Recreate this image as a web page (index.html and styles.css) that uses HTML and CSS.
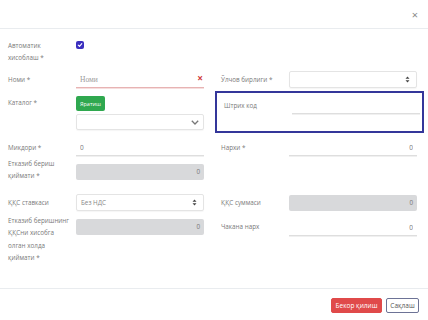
FILE: index.html
```html
<!DOCTYPE html>
<html lang="uz">
<head>
  <meta charset="UTF-8" />
  <meta name="viewport" content="width=device-width, initial-scale=1.0" />
  <title>Маҳсулот</title>
  <link rel="stylesheet" href="styles.css">
</head>
<body>
  <div class="modal">
    <div class="modal-header">
      <button type="button" class="close">&times;</button>
    </div>

    <div class="modal-body">
      <div class="row row-auto">
        <div class="group left top">
          <label class="lbl">Автоматик<br>хисоблаш *</label>
          <div class="ctl">
            <span class="check">
              <svg width="6" height="6" viewBox="0 0 10 10"><path d="M2 5.2 4.2 7.3 8 2.8" fill="none" stroke="#fff" stroke-width="1.8" stroke-linecap="round" stroke-linejoin="round"/></svg>
            </span>
          </div>
        </div>
      </div>

      <div class="row row-name">
        <div class="group left">
          <label class="lbl">Номи *</label>
          <div class="ctl line invalid">
            <input type="text" placeholder="Номи" spellcheck="false">
            <span class="clear">&times;</span>
          </div>
        </div>
        <div class="group right">
          <label class="lbl">Ўлчов бирлиги *</label>
          <div class="ctl select">
            <span></span>
            <svg class="updown" width="5" height="7" viewBox="0 0 5 7"><path d="M2.5 0.5 4.5 2.7H0.5Z M2.5 6.5 4.5 4.3H0.5Z" fill="#444"/></svg>
          </div>
        </div>
      </div>

      <div class="row row-catalog">
        <div class="group left top">
          <label class="lbl lbl-btn">Каталог *</label>
          <div class="ctl stack">
            <button type="button" class="btn-green">Яратиш</button>
            <div class="select">
              <span></span>
              <svg width="8" height="5" viewBox="0 0 8 5"><path d="M0.8 0.8 4 4 7.2 0.8" fill="none" stroke="#777" stroke-width="1.3"/></svg>
            </div>
          </div>
        </div>
        <div class="group right focus">
          <label class="lbl">Штрих код</label>
          <div class="ctl line"><input type="text" spellcheck="false"></div>
        </div>
      </div>

      <div class="row row-qty">
        <div class="group left">
          <label class="lbl">Микдори *</label>
          <div class="ctl line"><input type="text" value="0" spellcheck="false"></div>
        </div>
        <div class="group right">
          <label class="lbl">Нархи *</label>
          <div class="ctl line"><input type="text" class="num" value="0" spellcheck="false"></div>
        </div>
      </div>

      <div class="row row-cost">
        <div class="group left">
          <label class="lbl">Етказиб бериш<br>қиймати *</label>
          <div class="ctl readonly">0</div>
        </div>
      </div>

      <div class="row row-vat">
        <div class="group left">
          <label class="lbl">ҚҚС ставкаси</label>
          <div class="ctl select">
            <span>Без НДС</span>
            <svg class="updown" width="5" height="7" viewBox="0 0 5 7"><path d="M2.5 0.5 4.5 2.7H0.5Z M2.5 6.5 4.5 4.3H0.5Z" fill="#444"/></svg>
          </div>
        </div>
        <div class="group right">
          <label class="lbl">ҚҚС суммаси</label>
          <div class="ctl readonly">0</div>
        </div>
      </div>

      <div class="row row-total">
        <div class="group left top">
          <label class="lbl lbl-long">Етказиб беришнинг<br>ҚҚСни хисобга<br>олган холда<br>қиймати *</label>
          <div class="ctl readonly">0</div>
        </div>
        <div class="group right top">
          <label class="lbl lbl-mid">Чакана нарх</label>
          <div class="ctl line"><input type="text" class="num" value="0" spellcheck="false"></div>
        </div>
      </div>
    </div>

    <div class="modal-footer">
      <button type="button" class="btn btn-danger">Бекор қилиш</button>
      <button type="button" class="btn btn-outline">Сақлаш</button>
    </div>
  </div>
</body>
</html>
```

FILE: styles.css
```css
* {
  box-sizing: border-box;
}
body {
  margin: 0;
  background: #fff;
  font-family: 'Open Sans', sans-serif;
  font-size: 6.3px;
  color: #777;
}
.modal {
  width: 428px;
  height: 320px;
  display: flex;
  flex-direction: column;
}
.modal-header {
  height: 29px;
  border-bottom: 1px solid #e9ecef;
  display: flex;
  justify-content: flex-end;
  align-items: center;
  padding-right: 10px;
}
.close {
  border: none;
  background: none;
  padding: 0;
  font-family: 'Open Sans', sans-serif;
  font-size: 11px;
  line-height: 11px;
  color: #888;
  margin-top: 1px;
}
.modal-body {
  flex: 1;
  padding-top: 11px;
}
.row {
  display: flex;
}
.group {
  width: 214px;
  display: grid;
  grid-template-columns: 68px 128px;
  align-items: center;
}
.group.top {
  align-items: start;
}
.group.left {
  padding-left: 8px;
}
.group.right {
  padding-left: 7px;
}
.lbl {
  line-height: 12px;
  color: #7a7a7a;
  white-space: nowrap;
}

/* row spacing */
.row-name { margin-top: 7px; }
.row-catalog { margin-top: 3px; }
.row-qty { margin-top: 6px; }
.row-cost { margin-top: 5px; }
.row-vat { margin-top: 12px; }
.row-total { margin-top: 8px; }

.ctl {
  height: 17px;
  position: relative;
}
.check {
  display: flex;
  align-items: center;
  justify-content: center;
  width: 8px;
  height: 8px;
  margin-top: 1px;
  border-radius: 2px;
  background: #3b2fbf;
}
.row-auto .ctl {
  height: 24px;
}
.line {
  border-bottom: 1px solid #dedede;
  box-shadow: 0 1px 0 #f0f0f0;
}
.line.invalid {
  border-bottom-color: #e7b3b3;
  box-shadow: 0 1px 0 #f6dede;
}
.line input {
  width: 100%;
  height: 16px;
  border: none;
  outline: none;
  padding: 0 4px;
  background: transparent;
  font-family: 'Open Sans', sans-serif;
  font-size: 6.5px;
  color: #777;
  -webkit-text-fill-color: #777;
}
.line input::placeholder {
  font-family: 'Liberation Serif', serif;
  color: #9a9a9a;
  -webkit-text-fill-color: #9a9a9a;
  font-size: 7.5px;
}
.line input.num {
  text-align: right;
}
.clear {
  position: absolute;
  right: 1px;
  top: 2px;
  font-size: 10px;
  line-height: 11px;
  font-weight: bold;
  color: #d03a3a;
}
.select {
  height: 17px;
  border: 1px solid #e4e4e4;
  border-radius: 2px;
  box-shadow: 0 1px 1px rgba(0, 0, 0, 0.04);
  display: flex;
  align-items: center;
  justify-content: space-between;
  padding: 0 6px 0 4px;
  color: #888;
}
.readonly {
  height: 16px;
  background: #d8d9db;
  border-radius: 2px;
  text-align: right;
  padding-right: 4px;
  line-height: 16px;
  color: #777;
}
.stack {
  height: auto;
  padding-top: 5px;
}
.btn-green {
  display: block;
  height: 15px;
  padding: 0 4px;
  border: none;
  border-radius: 2px;
  background: #2fa84f;
  color: #fff;
  font-family: 'Open Sans', sans-serif;
  font-size: 5.5px;
  margin-bottom: 3px;
}
.stack .select {
  height: 16px;
  padding-right: 4px;
}
.lbl-btn {
  padding-top: 6px;
}
.focus {
  margin-left: 1px;
  margin-right: 4px;
  width: 209px;
  height: 42px;
  border: 2px solid #34369a;
  padding-left: 4px;
  align-items: start;
  padding-top: 4px;
}
.focus .lbl {
  padding-top: 3px;
}
.focus .ctl {
  height: 17px;
}
.row-cost .lbl {
  margin-top: -3px;
}
.lbl-long {
  margin-top: -4px;
  line-height: 12.3px;
}
.lbl-mid {
  padding-top: 2px;
}
.modal-footer {
  height: 32px;
  border-top: 1px solid #e9ecef;
  display: flex;
  justify-content: flex-end;
  align-items: flex-start;
  gap: 4px;
  padding: 9px 9px 0 0;
}
.btn {
  height: 15px;
  padding: 0;
  border-radius: 2px;
  font-family: 'Open Sans', sans-serif;
  font-size: 6.5px;
  line-height: 13px;
  white-space: nowrap;
  text-align: center;
}
.btn-danger {
  width: 51px;
  border: 1px solid #e04a4a;
  background: #e04a4a;
  color: #fff;
}
.btn-outline {
  width: 33px;
  border: 1px solid #6d7396;
  background: #fff;
  color: #555;
}
```
